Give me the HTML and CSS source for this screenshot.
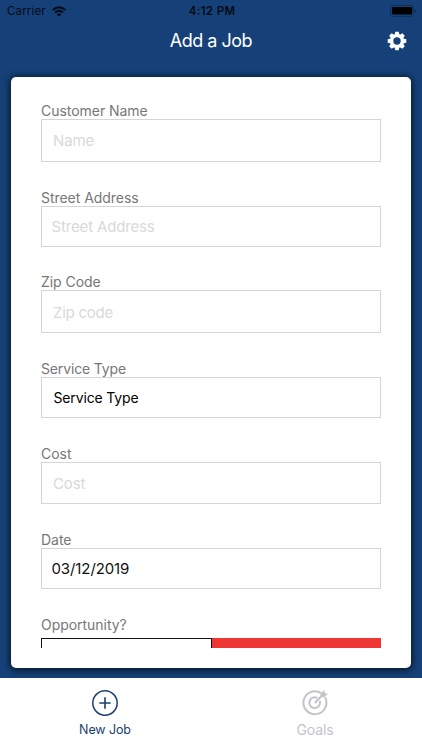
FILE: index.html
```html
<!DOCTYPE html>
<html lang="en">
<head>
<meta charset="utf-8">
<title>Add a Job</title>
<link rel="stylesheet" href="styles.css">
</head>
<body>
<div class="app">
  <div class="status">
    <div class="carrier"><span>Carrier</span>
      <svg width="14" height="11" viewBox="0 0 14 11"><g fill="none" stroke="#020a16" stroke-width="2"><path d="M.7 4.1Q7-1.7 13.3 4.1"/><path d="M3 6.6Q7 3.1 11 6.6"/></g><path d="M4.8 8.2Q7 6.5 9.2 8.2L7 10.5Z" fill="#020a16"/></svg>
    </div>
    <div class="time">4:12 PM</div>
    <svg class="battery" width="28" height="12" viewBox="0 0 28 12"><rect x="1.6" y=".6" width="23" height="10.8" rx="2.5" fill="none" stroke="#0e2f5c"/><rect x="3" y="2" width="20.2" height="7.6" rx="1" fill="#000"/><path d="M26 4Q28 6 26 8Z" fill="#0b2850"/></svg>
  </div>
  <header class="header">
    <h1>Add a Job</h1>
    <svg class="gear" width="20" height="20" viewBox="-10 -10 20 20"><g fill="#fff"><circle r="7"/><g><path id="tooth" d="M-2.5-6L-1.7-9.3H1.7L2.5-6V6L1.7 9.3H-1.7L-2.5 6Z"/><use href="#tooth" transform="rotate(45)"/><use href="#tooth" transform="rotate(90)"/><use href="#tooth" transform="rotate(135)"/></g></g><circle r="3.7" fill="#164178"/></svg>
  </header>
  <main class="card">
    <form class="form">
      <div class="field"><label>Customer Name</label><div class="box tall hint">Name</div></div>
      <div class="field"><label>Street Address</label><div class="box hint near">Street Address</div></div>
      <div class="field snug"><label>Zip Code</label><div class="box tall hint low">Zip code</div></div>
      <div class="field"><label class="tight">Service Type</label><div class="box select">Service Type</div></div>
      <div class="field"><label>Cost</label><div class="box mid hint">Cost</div></div>
      <div class="field"><label>Date</label><div class="box near date">03/12/2019</div></div>
      <div class="field"><label>Opportunity?</label><div class="toggle"><span class="off"></span><span class="on"></span></div></div>
    </form>
  </main>
  <nav class="tabs">
    <div class="tab active">
      <svg width="28" height="28" viewBox="0 0 28 28" fill="none" stroke="#1c416f"><circle cx="14" cy="14" r="12.2" stroke-width="1.5"/><path d="M14 8.3V19.7M8.3 14H19.7" stroke-width="1.6"/></svg>
      <span>New Job</span>
    </div>
    <div class="tab goals">
      <svg width="28" height="28" viewBox="0 0 28 28" fill="none" stroke="#c3c4cb"><path d="M20.2 4.1A11.5 11.5 0 1 0 24 8.2" stroke-width="2"/><path d="M16.4 8.9A5.4 5.4 0 1 0 18.8 11.8" stroke-width="2"/><path d="M13.8 14L22 5.5" stroke-width="1.9"/><path d="M19.2 8.3L19.8 4.3L23.4 1L23.8 4.2L27 4.7L23.5 7.9Z" fill="#c3c4cb" stroke="none"/></svg>
      <span>Goals</span>
    </div>
  </nav>
</div>
</body>
</html>
```
FILE: styles.css
```css
* { box-sizing: border-box; }
body { margin: 0; font-family: Inter, "Liberation Sans", sans-serif; background: #fff; }
svg { display: block; flex: none; }
.app { width: 422px; height: 750px; display: flex; flex-direction: column; background: #164178; overflow: hidden; }
.status { height: 22px; display: grid; grid-template-columns: 1fr auto 1fr; align-items: center; padding: 0 5px 0 7px; color: #020a16; font-size: 11.5px; line-height: 22px; }
.carrier { display: flex; align-items: center; gap: 6px; letter-spacing: .15px; }
.time { font-weight: 600; letter-spacing: .35px; }
.battery { justify-self: end; }
.header { height: 55px; display: grid; grid-template-columns: 1fr auto 1fr; align-items: start; padding: 0 15px; color: #fff; }
.header h1 { grid-column: 2; margin: 7px 0 0; font-size: 18px; line-height: 24px; font-weight: 400; letter-spacing: -.5px; }
.gear { justify-self: end; margin-top: 9px; }
.card { height: 591px; flex: none; margin: 0 11px 0 10.5px; padding: 25px 30px 20px 30.5px; background: #fff; border-radius: 5px; box-shadow: 0 1px 7px 1px rgba(0,0,0,.75); }
.form { height: 546px; overflow: hidden; }
.field { margin-bottom: 27px; }
.field label { display: block; height: 17px; line-height: 17px; font-size: 14px; letter-spacing: -.04px; color: #777; white-space: nowrap; }
.field .tight { letter-spacing: -.15px; }
.field.snug { margin-top: -1px; }
.box { display: flex; align-items: center; height: 41px; padding-left: 11px; border: 1px solid #d5d5d5; font-size: 15px; letter-spacing: -.1px; color: #111; }
.tall { height: 43px; }
.mid { height: 42px; }
.near { padding-left: 9.5px; }
.low { padding-top: 1px; letter-spacing: -.25px; }
.hint { color: #d9d9d9; }
.near.hint { letter-spacing: -.15px; }
.select { padding: 0 0 1px 11.5px; font-size: 14px; letter-spacing: -.15px; color: #000; }
.toggle { display: flex; height: 30px; margin-top: 5px; }
.toggle span { flex: 1; }
.off { border: 1px solid #111; }
.on { background: #ee3735; }
.tabs { height: 72px; flex: none; margin-top: auto; padding-right: 2px; display: flex; background: #fff; }
.tab { flex: 1; display: flex; flex-direction: column; align-items: center; padding-top: 11px; font-size: 12.5px; line-height: 18px; letter-spacing: -.1px; color: #1c416f; }
.tab span { margin-top: 4px; }
.goals { font-size: 14px; color: #c3c4cb; }
```
